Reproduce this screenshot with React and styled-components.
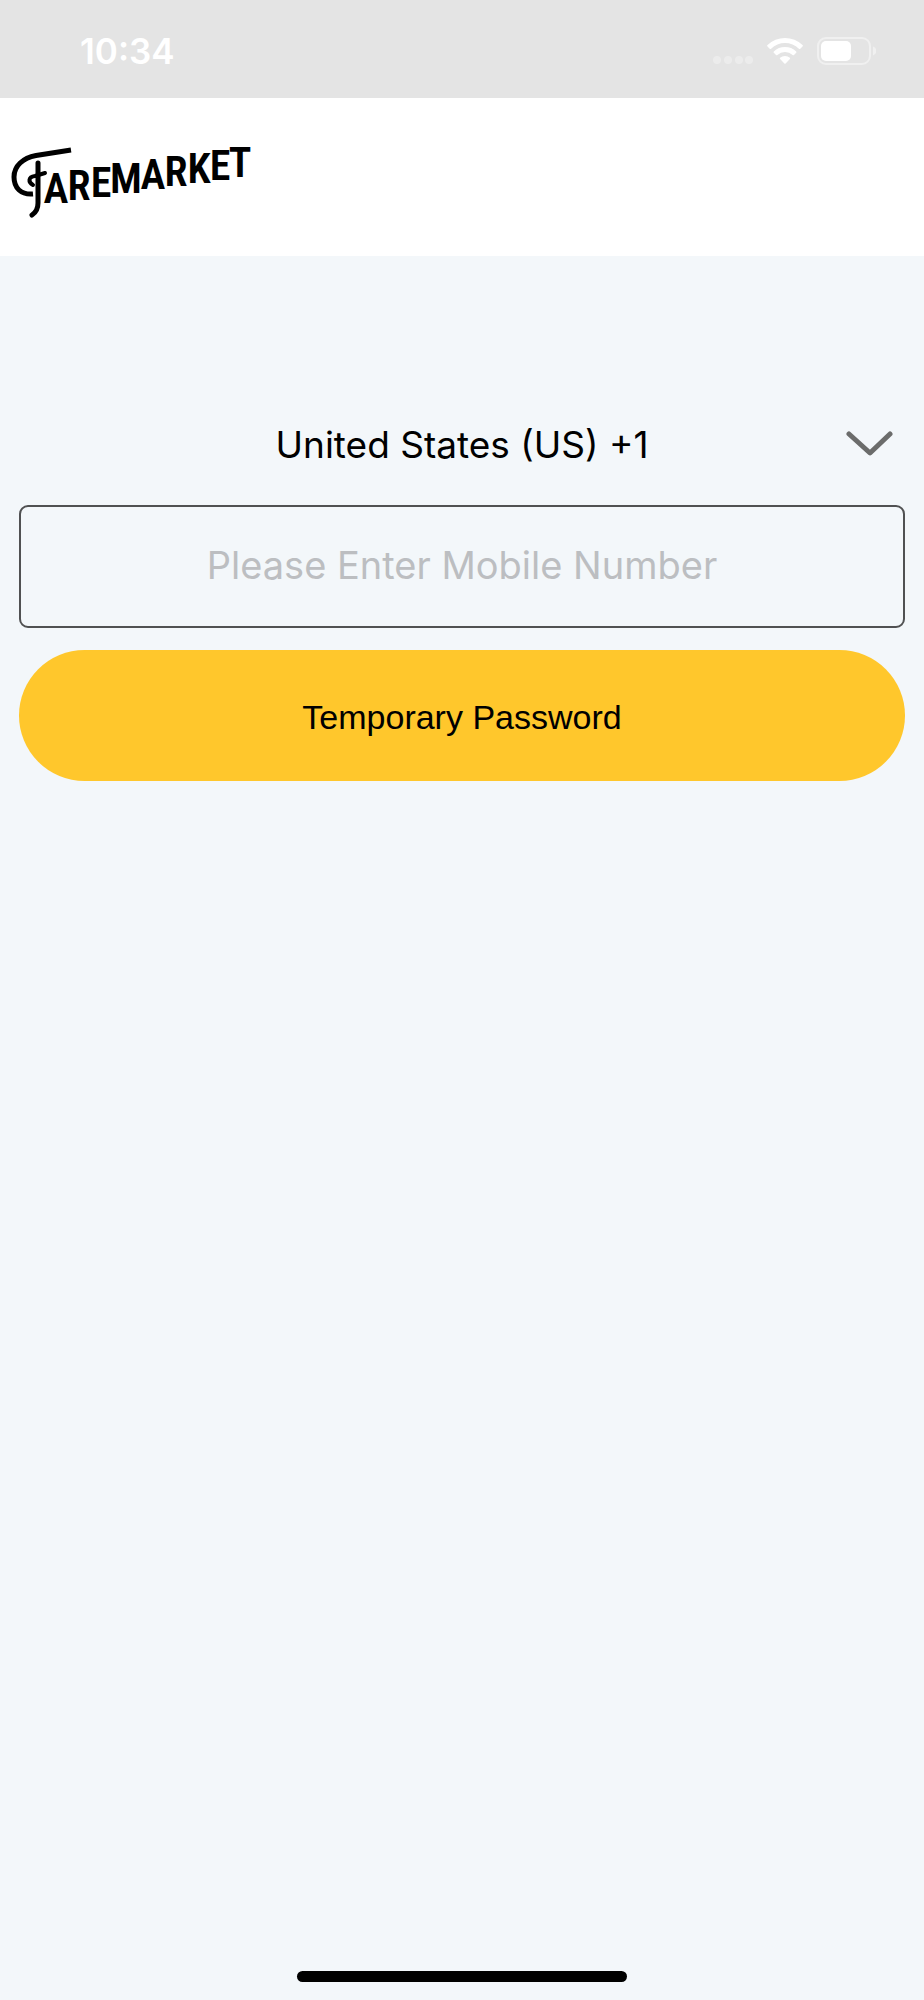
import React from "react";
import styled, { createGlobalStyle } from "styled-components";

const GlobalStyle = createGlobalStyle`
  *, *::before, *::after { box-sizing: border-box; }
  body { margin: 0; background: #f3f7fa; }
`;

const Screen = styled.div`
  display: flex;
  flex-direction: column;
  min-height: 100vh;
  background: #f3f7fa;
  color: #000;
  font-family: Inter, "Liberation Sans", sans-serif;
`;

const StatusBar = styled.div`
  display: flex;
  align-items: center;
  justify-content: space-between;
  height: 98px;
  padding: 4px 48px 0 80px;
  background: #e4e4e4;
  color: #fff;
`;

const Clock = styled.time`
  font-size: 35px;
  font-weight: 600;
  line-height: 40px;
`;

const StatusIcons = styled.div`
  display: flex;
  align-items: center;
  gap: 14px;
`;

const Header = styled.header`
  display: flex;
  height: 158px;
  padding: 32px 8px;
  background: #fff;
`;

const LogoLink = styled.a`
  display: block;
  height: 96px;
`;

const LogoArt = styled.svg`
  display: block;
  font-family: "Liberation Sans Narrow", "Roboto Condensed", "Liberation Sans", sans-serif;
  font-size: 42px;
  font-weight: 600;
  text-anchor: middle;
`;

const Form = styled.form`
  display: flex;
  flex-direction: column;
  flex: 1;
  padding: 146px 19px 0;
`;

const CountryPicker = styled.div`
  display: grid;
  align-items: center;
  height: 84px;
  margin-bottom: 19px;

  > * { grid-area: 1 / 1; }
  > svg { justify-self: end; margin-right: 12px; pointer-events: none; }
`;

const CountrySelect = styled.select`
  appearance: none;
  width: 100%;
  height: 84px;
  padding: 0;
  border: 0;
  background: transparent;
  color: #000;
  font-family: inherit;
  font-size: 37px;
  text-align: center;
  text-align-last: center;
`;

const PhoneInput = styled.input`
  width: 100%;
  height: 123px;
  padding: 0 16px 4px;
  border: 2px solid #505152;
  border-radius: 9px;
  background: transparent;
  color: #000;
  font-family: inherit;
  font-size: 38px;
  text-align: center;

  &::placeholder { color: #bcbec1; opacity: 1; }
`;

const SubmitButton = styled.button`
  width: 100%;
  height: 131px;
  margin-top: 22px;
  padding: 4px 16px 0;
  border: 0;
  border-radius: 66px;
  background: #ffc72c;
  color: #000;
  font-family: "Liberation Sans", Arial, sans-serif;
  font-size: 34px;
`;

const HomeBar = styled.footer`
  display: flex;
  justify-content: center;
  padding-bottom: 18px;

  &::before {
    content: "";
    width: 330px;
    height: 11px;
    border-radius: 6px;
    background: #000;
  }
`;

const CellDots = () => (
  <svg width="40" height="28" viewBox="0 0 40 28" fill="#ececec" aria-hidden="true">
    <circle cx="4" cy="23" r="4" />
    <circle cx="15" cy="23" r="4" />
    <circle cx="26" cy="23" r="4" />
    <circle cx="36" cy="23" r="4" />
  </svg>
);

const Wifi = () => (
  <svg width="36" height="28" viewBox="0 0 36 28" fill="#fff" aria-hidden="true">
    <path d="M.5 8.1a25 25 0 0 1 35 0q.7.7 0 1.4l-2.2 2.2q-.7.6-1.4 0a20 20 0 0 0-27.8 0q-.7.6-1.4 0L.5 9.5q-.7-.7 0-1.4Z" />
    <path d="M6.8 14.4a16.2 16.2 0 0 1 22.4 0q.7.7 0 1.4L27 18q-.7.6-1.4 0a11 11 0 0 0-15.2 0q-.7.6-1.4 0l-2.2-2.2q-.7-.7 0-1.4Z" />
    <path d="M13.1 20.8a7.4 7.4 0 0 1 9.8 0q.6.6 0 1.2L18.6 26.4q-.6.6-1.2 0L13.1 22q-.6-.6 0-1.2Z" />
  </svg>
);

const Battery = () => (
  <svg width="59" height="28" viewBox="0 0 59 28" aria-hidden="true">
    <rect x="1" y="1" width="52" height="26" rx="8" fill="none" stroke="#f0f0f0" strokeWidth="2" />
    <rect x="4" y="4" width="30" height="20" rx="5" fill="#fff" />
    <path d="M56 9.5q3.5 1.500 3.5 4.5T56 18.5Z" fill="#f0f0f0" />
  </svg>
);

const Chevron = () => (
  <svg width="48" height="28" viewBox="0 0 48 28" fill="none" stroke="#6b6c6b" strokeWidth="5" strokeLinecap="round" strokeLinejoin="round" aria-hidden="true">
    <path d="M4 4 25 23 45 4" />
  </svg>
);

const Logo = () => (
  <LogoArt width="248" height="96" viewBox="8 130 248 96" role="img" aria-label="Faremarket">
    <g fill="none" stroke="#000" strokeLinecap="round" strokeLinejoin="round">
      <path d="M71 150 36 155.500C23 158 14 166 14 177C14 188 21 195 33 194" strokeWidth="5" strokeLinecap="butt" />
      <path d="M38 163V203C38 210 35 213 32 215" strokeWidth="5" />
      <path d="M45 173 35 176C28 177 28 182 33 185" strokeWidth="4" />
    </g>
    <text
      x="56 79 101 126 153 176 199 220 240"
      y="203 200 197 193 189 186 183 180 177"
    >
      AREMARKET
    </text>
  </LogoArt>
);

export default function App() {
  return (
    <Screen>
      <GlobalStyle />
      <StatusBar>
        <Clock>10:34</Clock>
        <StatusIcons>
          <CellDots />
          <Wifi />
          <Battery />
        </StatusIcons>
      </StatusBar>
      <Header>
        <LogoLink href="#home">
          <Logo />
        </LogoLink>
      </Header>
      <Form onSubmit={(event) => event.preventDefault()}>
        <CountryPicker>
          <CountrySelect aria-label="Country code" defaultValue="us">
            <option value="us">United States (US) +1</option>
          </CountrySelect>
          <Chevron />
        </CountryPicker>
        <PhoneInput type="tel" aria-label="Mobile number" placeholder="Please Enter Mobile Number" />
        <SubmitButton type="submit">Temporary Password</SubmitButton>
      </Form>
      <HomeBar />
    </Screen>
  );
}
